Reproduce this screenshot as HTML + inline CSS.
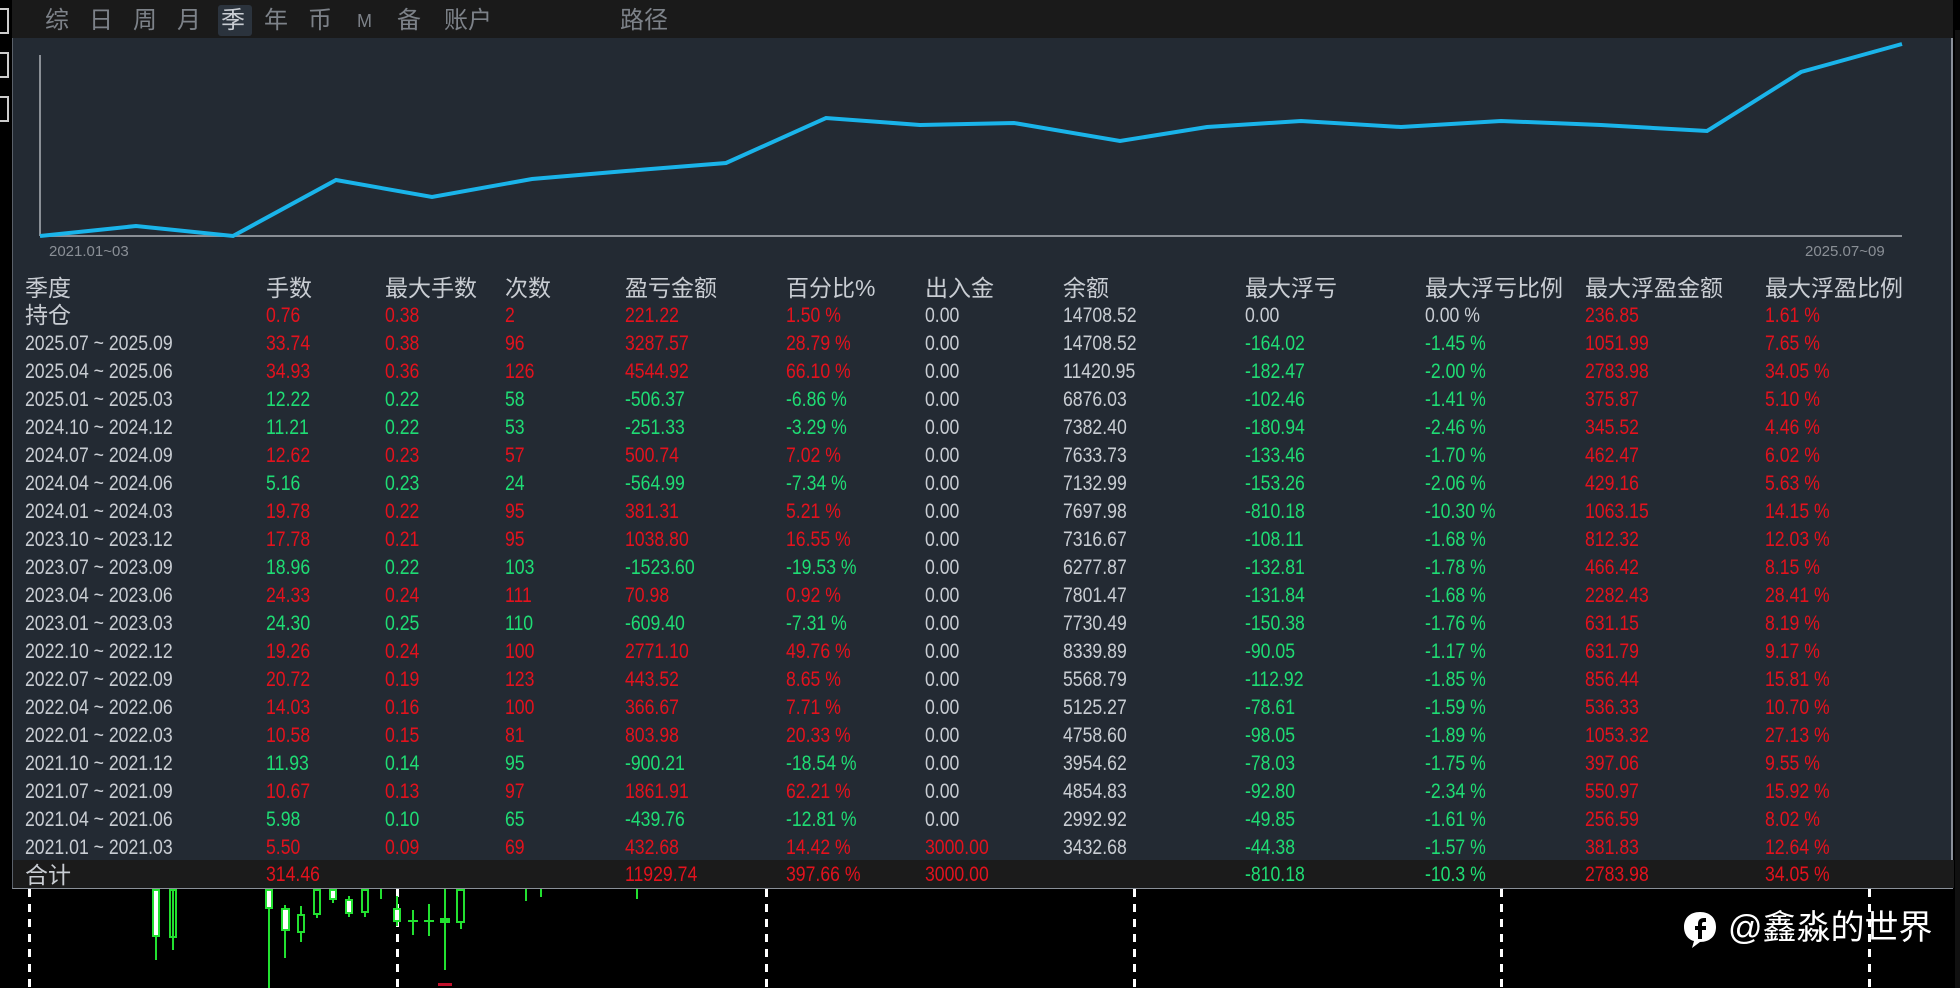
<!DOCTYPE html>
<html><head><meta charset="utf-8"><style>
*{margin:0;padding:0;box-sizing:border-box}
body{width:1960px;height:988px;background:#000;position:relative;overflow:hidden;font-family:"Liberation Sans","Noto Sans CJK SC",sans-serif}
.top{position:absolute;left:12px;top:0;width:1941px;height:38px;background:#1a1a1a}
.tab{position:absolute;top:6px;font-size:24px;color:#7d8289;line-height:30px}
.panel{position:absolute;left:12px;top:38px;width:1941px;height:851px;background:#232a33;border-right:2px solid #8a9099;border-bottom:2px solid #8a9099;border-left:1px solid #5a6069}
.r{position:absolute;left:0;width:1941px;height:28px;font-size:21px;line-height:28px;white-space:nowrap}
.r span{position:absolute;top:1px;display:inline-block;transform:scaleX(0.84);transform-origin:left}
.w{color:#c9cdd3}.R{color:#e3121d}.G{color:#1fdc74}
.hd span{color:#c9cdd3;font-size:23px;transform:none}
.tot{background:#1b1b1b}
.dash{position:absolute;top:889px;width:3px;height:99px;background:repeating-linear-gradient(#fff 0 8px,transparent 8px 15px)}
.c{position:absolute;background:#22e030}
</style></head><body>
<div style="position:absolute;left:0;top:0;width:12px;height:988px;background:#000"></div>
<div style="position:absolute;left:0;top:8px;width:9px;height:26px;border:2px solid #ccc;border-left:none"></div>
<div style="position:absolute;left:0;top:52px;width:9px;height:26px;border:2px solid #ccc;border-left:none"></div>
<div style="position:absolute;left:0;top:96px;width:9px;height:26px;border:2px solid #ccc;border-left:none"></div>
<div class="top">
<div style="position:absolute;left:206px;top:5px;width:34px;height:31px;background:#2b333d;border-radius:3px"></div>
<span class="tab" style="left:33px">综</span><span class="tab" style="left:77px">日</span><span class="tab" style="left:121px">周</span><span class="tab" style="left:165px">月</span><span class="tab" style="left:209px;color:#c9cdd3">季</span><span class="tab" style="left:252px">年</span><span class="tab" style="left:296px">币</span><span class="tab" style="left:345px;font-size:18px">M</span><span class="tab" style="left:385px">备</span><span class="tab" style="left:432px">账户</span><span class="tab" style="left:608px">路径</span>
</div>
<div class="panel">
<svg style="position:absolute;left:0;top:0" width="1941" height="260">
<line x1="27" y1="17" x2="27" y2="198" stroke="#8a8f96" stroke-width="2"/>
<line x1="27" y1="198" x2="1889" y2="198" stroke="#8a8f96" stroke-width="2"/>
<polyline fill="none" stroke="#1ab4ea" stroke-width="4" points="27,198 123,188 220,198 323,142 419,159 519,141 613,133 713,125 813,80 907,87 1001,85 1107,103 1194,89 1288,83 1388,89 1488,83 1588,87 1694,93 1788,34 1889,6"/>
<text x="36" y="218" font-size="15" fill="#8a8f96" font-family="Liberation Sans">2021.01~03</text>
<text x="1792" y="218" font-size="15" fill="#8a8f96" font-family="Liberation Sans">2025.07~09</text>
</svg>
<div class="r hd" style="top:235px"><span style="left:12px">季度</span><span style="left:253px">手数</span><span style="left:372px">最大手数</span><span style="left:492px">次数</span><span style="left:612px">盈亏金额</span><span style="left:773px">百分比%</span><span style="left:912px">出入金</span><span style="left:1050px">余额</span><span style="left:1232px">最大浮亏</span><span style="left:1412px">最大浮亏比例</span><span style="left:1572px">最大浮盈金额</span><span style="left:1752px">最大浮盈比例</span></div>
<div class="r" style="top:263px"><span class="w" style="left:12px;font-size:23px;transform:none;top:0">持仓</span><span class="R" style="left:253px">0.76</span><span class="R" style="left:372px">0.38</span><span class="R" style="left:492px">2</span><span class="R" style="left:612px">221.22</span><span class="R" style="left:773px">1.50 %</span><span class="w" style="left:912px">0.00</span><span class="w" style="left:1050px">14708.52</span><span class="w" style="left:1232px">0.00</span><span class="w" style="left:1412px">0.00 %</span><span class="R" style="left:1572px">236.85</span><span class="R" style="left:1752px">1.61 %</span></div>
<div id="rows"></div>
<div class="r tot" style="top:822px"><span class="w" style="left:12px;font-size:23px;transform:none">合计</span><span class="R" style="left:253px">314.46</span><span class="R" style="left:612px">11929.74</span><span class="R" style="left:773px">397.66 %</span><span class="R" style="left:912px">3000.00</span><span class="G" style="left:1232px">-810.18</span><span class="G" style="left:1412px">-10.3 %</span><span class="R" style="left:1572px">2783.98</span><span class="R" style="left:1752px">34.05 %</span></div>
</div>
<script>
var d=[
["2025.07 ~ 2025.09","33.74","0.38","96","3287.57","28.79 %","0.00","14708.52","-164.02","-1.45 %","1051.99","7.65 %"],
["2025.04 ~ 2025.06","34.93","0.36","126","4544.92","66.10 %","0.00","11420.95","-182.47","-2.00 %","2783.98","34.05 %"],
["2025.01 ~ 2025.03","12.22","0.22","58","-506.37","-6.86 %","0.00","6876.03","-102.46","-1.41 %","375.87","5.10 %"],
["2024.10 ~ 2024.12","11.21","0.22","53","-251.33","-3.29 %","0.00","7382.40","-180.94","-2.46 %","345.52","4.46 %"],
["2024.07 ~ 2024.09","12.62","0.23","57","500.74","7.02 %","0.00","7633.73","-133.46","-1.70 %","462.47","6.02 %"],
["2024.04 ~ 2024.06","5.16","0.23","24","-564.99","-7.34 %","0.00","7132.99","-153.26","-2.06 %","429.16","5.63 %"],
["2024.01 ~ 2024.03","19.78","0.22","95","381.31","5.21 %","0.00","7697.98","-810.18","-10.30 %","1063.15","14.15 %"],
["2023.10 ~ 2023.12","17.78","0.21","95","1038.80","16.55 %","0.00","7316.67","-108.11","-1.68 %","812.32","12.03 %"],
["2023.07 ~ 2023.09","18.96","0.22","103","-1523.60","-19.53 %","0.00","6277.87","-132.81","-1.78 %","466.42","8.15 %"],
["2023.04 ~ 2023.06","24.33","0.24","111","70.98","0.92 %","0.00","7801.47","-131.84","-1.68 %","2282.43","28.41 %"],
["2023.01 ~ 2023.03","24.30","0.25","110","-609.40","-7.31 %","0.00","7730.49","-150.38","-1.76 %","631.15","8.19 %"],
["2022.10 ~ 2022.12","19.26","0.24","100","2771.10","49.76 %","0.00","8339.89","-90.05","-1.17 %","631.79","9.17 %"],
["2022.07 ~ 2022.09","20.72","0.19","123","443.52","8.65 %","0.00","5568.79","-112.92","-1.85 %","856.44","15.81 %"],
["2022.04 ~ 2022.06","14.03","0.16","100","366.67","7.71 %","0.00","5125.27","-78.61","-1.59 %","536.33","10.70 %"],
["2022.01 ~ 2022.03","10.58","0.15","81","803.98","20.33 %","0.00","4758.60","-98.05","-1.89 %","1053.32","27.13 %"],
["2021.10 ~ 2021.12","11.93","0.14","95","-900.21","-18.54 %","0.00","3954.62","-78.03","-1.75 %","397.06","9.55 %"],
["2021.07 ~ 2021.09","10.67","0.13","97","1861.91","62.21 %","0.00","4854.83","-92.80","-2.34 %","550.97","15.92 %"],
["2021.04 ~ 2021.06","5.98","0.10","65","-439.76","-12.81 %","0.00","2992.92","-49.85","-1.61 %","256.59","8.02 %"],
["2021.01 ~ 2021.03","5.50","0.09","69","432.68","14.42 %","3000.00","3432.68","-44.38","-1.57 %","381.83","12.64 %"]];
var L=[12,253,372,492,612,773,912,1050,1232,1412,1572,1752],h="";
d.forEach(function(r,i){var c=r[4][0]=="-"?"G":"R";h+='<div class="r" style="top:'+(291+28*i)+'px">';
r.forEach(function(v,j){var k=j==0||j==7?"w":j<=5?c:j==6?(v=="0.00"?"w":"R"):j<=9?"G":"R";h+='<span class="'+k+'" style="left:'+L[j]+'px">'+v+'</span>';});h+='</div>';});
document.getElementById("rows").innerHTML=h;
</script>
<div class="dash" style="left:28px"></div><div class="dash" style="left:396px"></div><div class="dash" style="left:765px"></div><div class="dash" style="left:1133px"></div><div class="dash" style="left:1500px"></div><div class="dash" style="left:1868px"></div>
<div class="c" style="left:155px;top:889px;width:2px;height:71px"></div><div class="c" style="left:152px;top:889px;width:8px;height:48px;background:#fff;border:2px solid #22e030"></div>
<div class="c" style="left:172px;top:889px;width:2px;height:61px"></div><div style="position:absolute;left:169px;top:889px;width:8px;height:49px;border:2px solid #22e030"></div>
<div class="c" style="left:268px;top:889px;width:2px;height:99px"></div><div style="position:absolute;left:265px;top:889px;width:8px;height:20px;background:#fff;border:2px solid #22e030"></div>
<div class="c" style="left:284px;top:905px;width:2px;height:53px"></div><div style="position:absolute;left:281px;top:908px;width:9px;height:23px;background:#fff;border:2px solid #22e030"></div>
<div class="c" style="left:300px;top:906px;width:2px;height:36px"></div><div style="position:absolute;left:297px;top:914px;width:8px;height:19px;background:#000;border:2px solid #22e030"></div>
<div class="c" style="left:316px;top:889px;width:2px;height:29px"></div><div style="position:absolute;left:313px;top:889px;width:8px;height:26px;background:#000;border:2px solid #22e030"></div>
<div class="c" style="left:332px;top:889px;width:2px;height:14px"></div><div style="position:absolute;left:329px;top:889px;width:8px;height:11px;background:#fff;border:2px solid #22e030"></div>
<div class="c" style="left:348px;top:896px;width:2px;height:21px"></div><div style="position:absolute;left:345px;top:899px;width:8px;height:15px;background:#fff;border:2px solid #22e030"></div>
<div class="c" style="left:364px;top:889px;width:2px;height:28px"></div><div style="position:absolute;left:361px;top:889px;width:8px;height:24px;background:#000;border:2px solid #22e030"></div>
<div class="c" style="left:380px;top:889px;width:2px;height:10px"></div>
<div class="c" style="left:396px;top:896px;width:2px;height:30px"></div><div style="position:absolute;left:393px;top:908px;width:8px;height:14px;background:#fff;border:2px solid #22e030"></div>
<div class="c" style="left:412px;top:910px;width:2px;height:25px"></div><div class="c" style="left:408px;top:920px;width:10px;height:2px"></div>
<div class="c" style="left:428px;top:904px;width:2px;height:32px"></div><div class="c" style="left:424px;top:920px;width:10px;height:2px"></div>
<div class="c" style="left:444px;top:889px;width:2px;height:81px"></div><div class="c" style="left:440px;top:918px;width:10px;height:5px"></div>
<div class="c" style="left:460px;top:889px;width:2px;height:40px"></div><div style="position:absolute;left:456px;top:889px;width:9px;height:34px;background:#000;border:2px solid #22e030"></div>
<div style="position:absolute;left:438px;top:983px;width:14px;height:3px;background:#c0102a"></div>
<div class="c" style="left:525px;top:889px;width:2px;height:12px"></div><div class="c" style="left:540px;top:889px;width:2px;height:8px"></div>
<div class="c" style="left:636px;top:889px;width:2px;height:10px"></div>
<svg style="position:absolute;left:1683px;top:911px" width="34" height="38" viewBox="0 0 34 38"><path d="M17 1C7 1 1 7 1 16c0 8 5 13 10 14l-2 7 8-6c10 0 16-6 16-15S27 1 17 1z" fill="#fff"/><path d="M21 7c-4 0-6 2-6 6v2h-3v4h3v9h4v-9h4v-4h-4v-2c0-2 1-2 3-2h1V7z" fill="#000"/></svg>
<div style="position:absolute;left:1728px;top:906px;font-size:34px;color:#fff;line-height:44px">@鑫淼的世界</div>
<div style="position:absolute;left:1955px;top:30px;width:5px;height:958px;background:#111"></div>
</body></html>
